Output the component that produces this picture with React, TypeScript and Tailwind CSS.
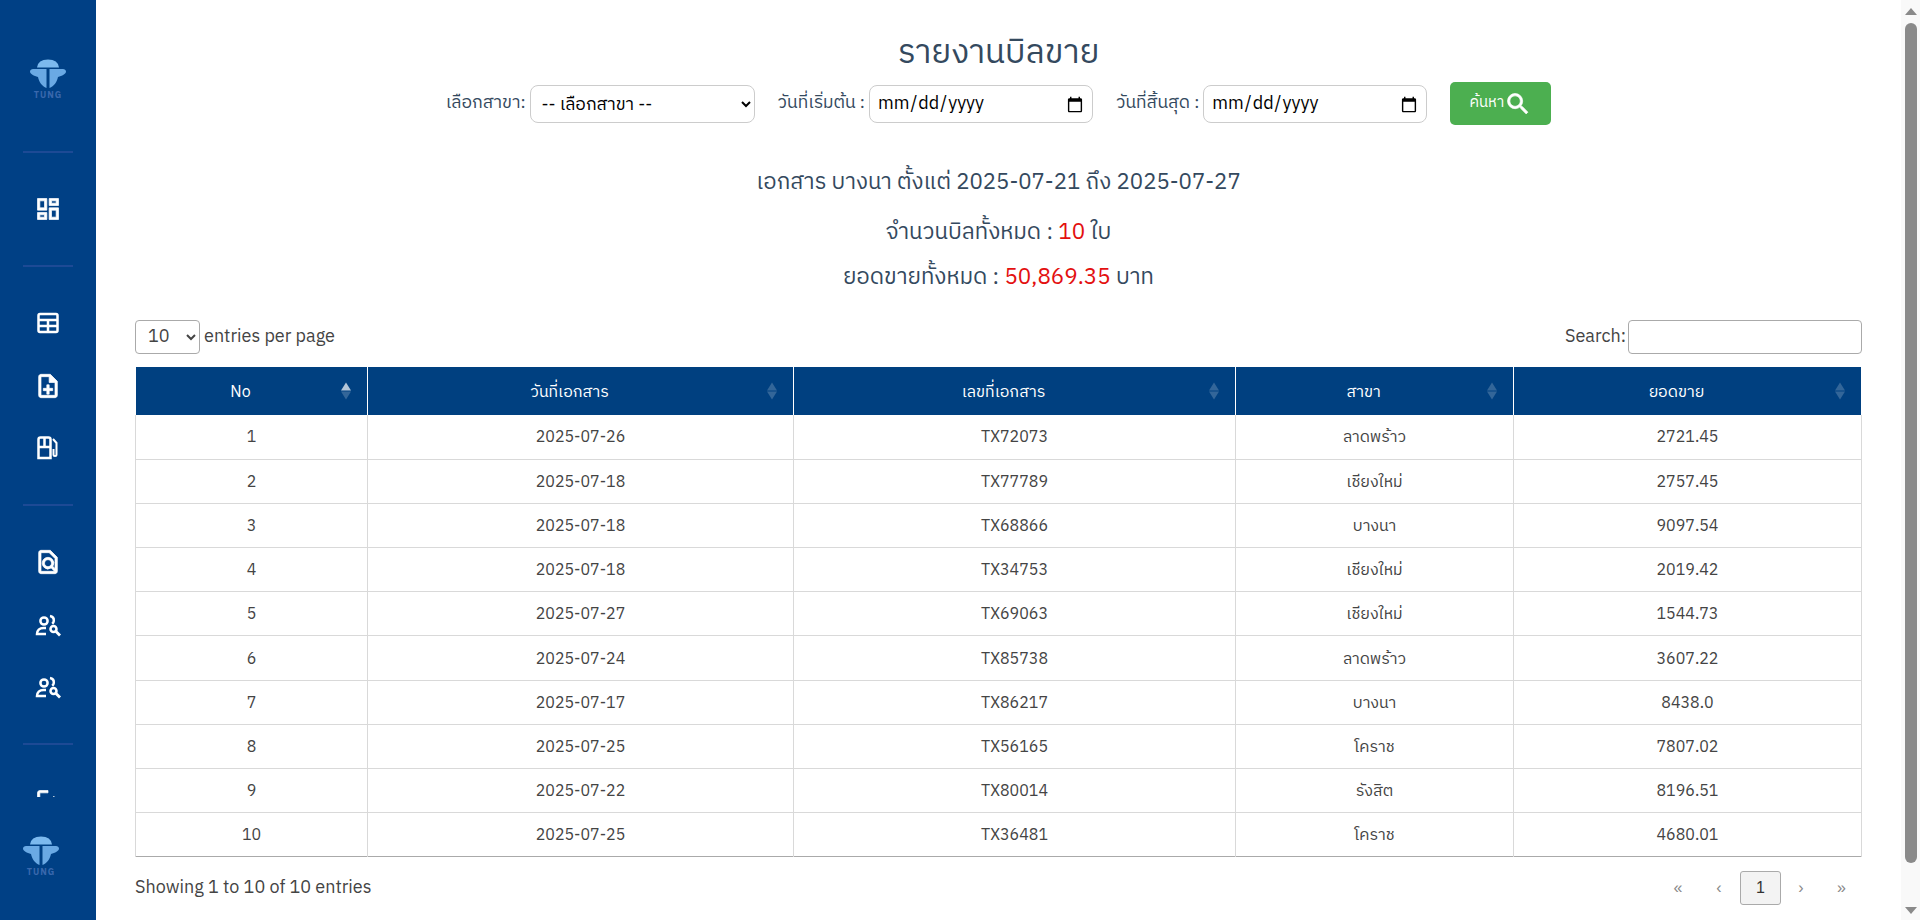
import { MdOutlineDashboard, MdOutlineNoteAdd, MdOutlineFindInPage, MdOutlineLogout, MdSearch } from 'react-icons/md'

const rows = [
  ['1', '2025-07-26', 'TX72073', 'ลาดพร้าว', '2721.45'],
  ['2', '2025-07-18', 'TX77789', 'เชียงใหม่', '2757.45'],
  ['3', '2025-07-18', 'TX68866', 'บางนา', '9097.54'],
  ['4', '2025-07-18', 'TX34753', 'เชียงใหม่', '2019.42'],
  ['5', '2025-07-27', 'TX69063', 'เชียงใหม่', '1544.73'],
  ['6', '2025-07-24', 'TX85738', 'ลาดพร้าว', '3607.22'],
  ['7', '2025-07-17', 'TX86217', 'บางนา', '8438.0'],
  ['8', '2025-07-25', 'TX56165', 'โคราช', '7807.02'],
  ['9', '2025-07-22', 'TX80014', 'รังสิต', '8196.51'],
  ['10', '2025-07-25', 'TX36481', 'โคราช', '4680.01'],
]

const columns = [
  { label: 'No', width: 'w-[232px]', active: true },
  { label: 'วันที่เอกสาร', width: 'w-[426px]', active: false },
  { label: 'เลขที่เอกสาร', width: 'w-[442px]', active: false },
  { label: 'สาขา', width: 'w-[278px]', active: false },
  { label: 'ยอดขาย', width: 'w-auto', active: false },
]

function Logo() {
  return (
    <div className="flex w-[36px] flex-col items-center">
      <svg width="36" height="30" viewBox="0 0 36 30">
        <path d="M7 8.500Q8 .5 18 .5T29 8.500z" fill="#7cb9ee" />
        <path d="M3 10h13.500v19C12 27 9 23 8 18c-4-1-8-3-8-5.500C0 11 1.500 10 3 10z" fill="#6aa9e4" />
        <path d="M33 10H19.500v19c4.500-2 7.500-6 8.500-11 4-1 8-3 8-5.500 0-1.500-1.500-2.500-3-2.500z" fill="#6aa9e4" />
      </svg>
      <span className="mt-[3px] text-[9px] leading-[8px] font-bold tracking-[1px] text-[#3a68ad]">TUNG</span>
    </div>
  )
}

function TableIcon() {
  return (
    <svg width="28" height="28" viewBox="0 0 28 28" fill="none" stroke="white" strokeWidth="2.500">
      <rect x="4.500" y="5" width="19" height="18" rx="1.500" />
      <path d="M4.500 11h19M4.500 17h19M14 11v12" />
    </svg>
  )
}

function FuelDoc() {
  return (
    <svg width="28" height="28" viewBox="0 0 28 28" fill="none" stroke="white" strokeWidth="2.500">
      <path d="M4.500 24V5.500a2 2 0 0 1 2-2h8a2 2 0 0 1 2 2V24z" />
      <path d="M4.500 13h12M10.500 3.500V13" />
      <path d="M19 5l3.500 4v11.500a1.500 1.500 0 0 1-3 0V15" strokeWidth="2" />
    </svg>
  )
}

function PeopleSearch() {
  return (
    <svg width="28" height="28" viewBox="0 0 28 28" fill="none" stroke="white" strokeWidth="2.500">
      <circle cx="10" cy="10" r="3.600" />
      <path d="M16 5c2.800.5 4 2.500 3.800 4.800-.1 1.200-.7 2.200-1.600 3" />
      <path d="M12 17H9.500C5.500 17 3 19.500 3 23h9" />
      <circle cx="19.500" cy="18" r="3" />
      <path d="M22 20.500l4 4" strokeWidth="2.800" />
    </svg>
  )
}

function Divider() {
  return <div className="mx-auto my-[42px] h-[2px] w-[50px] shrink-0 bg-[#1d4a95]" />
}

function Sidebar() {
  const iconClass = 'mx-auto h-[28px] w-[28px] shrink-0 text-white stroke-[0.6] [&_path[fill=none]]:stroke-0'
  return (
    <aside className="flex h-full w-[96px] shrink-0 flex-col bg-[#004085]">
      <div className="flex h-[797px] shrink-0 flex-col overflow-hidden">
        <div className="mx-auto mt-[59px] shrink-0"><Logo /></div>
        <div className="mx-auto mb-[42px] mt-[51px] h-[2px] w-[50px] shrink-0 bg-[#1d4a95]" />
        <MdOutlineDashboard className={iconClass} />
        <Divider />
        <div className="flex flex-col gap-[34.5px]">
          <div className="mx-auto h-[28px]"><TableIcon /></div>
          <MdOutlineNoteAdd className={iconClass} />
          <div className="mx-auto h-[28px]"><FuelDoc /></div>
        </div>
        <Divider />
        <div className="flex flex-col gap-[34.5px]">
          <MdOutlineFindInPage className={iconClass} />
          <div className="mx-auto h-[28px]"><PeopleSearch /></div>
          <div className="mx-auto h-[28px]"><PeopleSearch /></div>
        </div>
        <Divider />
        <MdOutlineLogout className={iconClass} />
      </div>
      <div className="pl-[23px] pt-[39px]"><Logo /></div>
    </aside>
  )
}

function DateField({ label }: { label: string }) {
  return (
    <label className="flex items-center gap-[4px] text-[17.6px] text-[#34495e]">
      <span>{label}</span>
      <input type="date" className="h-[38px] w-[224px] rounded-[8px] border border-[#ccc] bg-white pl-[7px] pr-[6px] pt-[2px] text-[18px] text-black" />
    </label>
  )
}

function SortArrows({ active }: { active: boolean }) {
  return (
    <span className="absolute right-[16px] top-1/2 flex -translate-y-1/2 flex-col gap-[1px]">
      <span className={`h-0 w-0 border-x-[5px] border-b-[8px] border-x-transparent ${active ? 'border-b-[#b3c6d9]' : 'border-b-[#336699]'}`} />
      <span className="h-0 w-0 border-x-[5px] border-t-[8px] border-x-transparent border-t-[#336699]" />
    </span>
  )
}

export default function App() {
  return (
    <div className="flex h-screen overflow-hidden bg-white font-['IBM_Plex_Sans_Thai','Noto_Sans','Noto_Sans_Thai','Liberation_Sans',sans-serif] text-[#333]">
      <Sidebar />
      <main className="min-w-0 flex-1 pl-[39px] pr-[39px]">
        <h1 className="mt-[31px] text-center text-[33.2px] leading-[46px] text-[#34495e]">รายงานบิลขาย</h1>
        <div className="mt-[5px] flex items-center justify-center">
          <label className="flex items-center gap-[4px] text-[17.6px] text-[#34495e]">
            <span>เลือกสาขา:</span>
            <select className="h-[38px] w-[225px] rounded-[8px] border border-[#ccc] bg-white pl-[7px] pt-[2px] text-[17.5px] text-black">
              <option>-- เลือกสาขา --</option>
            </select>
          </label>
          <div className="ml-[23px]"><DateField label="วันที่เริ่มต้น :" /></div>
          <div className="ml-[23px]"><DateField label="วันที่สิ้นสุด :" /></div>
          <button className="ml-[23px] flex h-[43px] w-[101px] items-center justify-center rounded-[5px] bg-[#4caf50] text-[15px] text-white">
            ค้นหา<MdSearch className="h-[28px] w-[28px] stroke-[0.6] [&_path[fill=none]]:stroke-0" />
          </button>
        </div>
        <p className="mt-[40px] text-center text-[22.2px] leading-[36px] text-[#34495e]">เอกสาร บางนา ตั้งแต่ 2025-07-21 ถึง 2025-07-27</p>
        <p className="mt-[16px] text-center text-[22.4px] leading-[32px] text-[#34495e]">จำนวนบิลทั้งหมด : <span className="text-[#e31010]">10</span> ใบ</p>
        <p className="mt-[13px] text-center text-[22.4px] leading-[32px] text-[#34495e]">ยอดขายทั้งหมด : <span className="text-[#e31010]">50,869.35</span> บาท</p>
        <div className="mt-[26px] flex items-center justify-between text-[18px] text-[#444]">
          <div className="flex items-center gap-[4px]">
            <select className="h-[34px] w-[65px] rounded-[4px] border border-[#aaa] bg-white pl-[8px] text-[18px]">
              <option>10</option>
            </select>
            <span>entries per page</span>
          </div>
          <div className="flex items-center gap-[2px]">
            <span>Search:</span>
            <input className="h-[34px] w-[234px] rounded-[4px] border border-[#aaa]" />
          </div>
        </div>
        <table className="mt-[13px] w-full table-fixed border-collapse text-[16px]">
          <thead>
            <tr className="h-[48px] bg-[#004080] text-white">
              {columns.map((c) => (
                <th key={c.label} className={`relative border-x border-x-white/70 pr-[22px] pt-[4px] text-center text-[16px] font-normal ${c.width}`}>
                  {c.label}
                  <SortArrows active={c.active} />
                </th>
              ))}
            </tr>
          </thead>
          <tbody>
            {rows.map((r) => (
              <tr key={r[0]} className="h-[44.2px] border-b border-[#d9d9d9] last:border-[#aaa]">
                {r.map((cell, i) => (
                  <td key={i} className="border-x border-[#d9d9d9] pt-[3px] text-center text-[#444]">{cell}</td>
                ))}
              </tr>
            ))}
          </tbody>
        </table>
        <div className="mt-[14px] flex items-center justify-between text-[18px] text-[#444]">
          <span>Showing 1 to 10 of 10 entries</span>
          <div className="flex items-center font-['Liberation_Sans',sans-serif] text-[16px] text-[#888]">
            <span className="w-[40px] text-center">«</span>
            <span className="w-[42px] text-center">‹</span>
            <span className="flex h-[34px] w-[41px] items-center justify-center rounded-[3px] border border-[#aaa] bg-[#f3f3f3] text-[#333]">1</span>
            <span className="w-[40px] text-center">›</span>
            <span className="w-[41px] text-center">»</span>
          </div>
        </div>
      </main>
      <div className="flex h-full w-[19px] shrink-0 flex-col items-start bg-[#f9f9f9] pl-[4px]">
        <span className="mt-[8px] h-0 w-0 border-x-[6px] border-b-[7px] border-x-transparent border-b-[#8a8a8a]" />
        <div className="mt-[8px] h-[840px] w-[12px] rounded-full bg-[#8a8a8a]" />
        <span className="mb-[6px] mt-auto h-0 w-0 border-x-[6px] border-t-[7px] border-x-transparent border-t-[#8a8a8a]" />
      </div>
    </div>
  )
}
